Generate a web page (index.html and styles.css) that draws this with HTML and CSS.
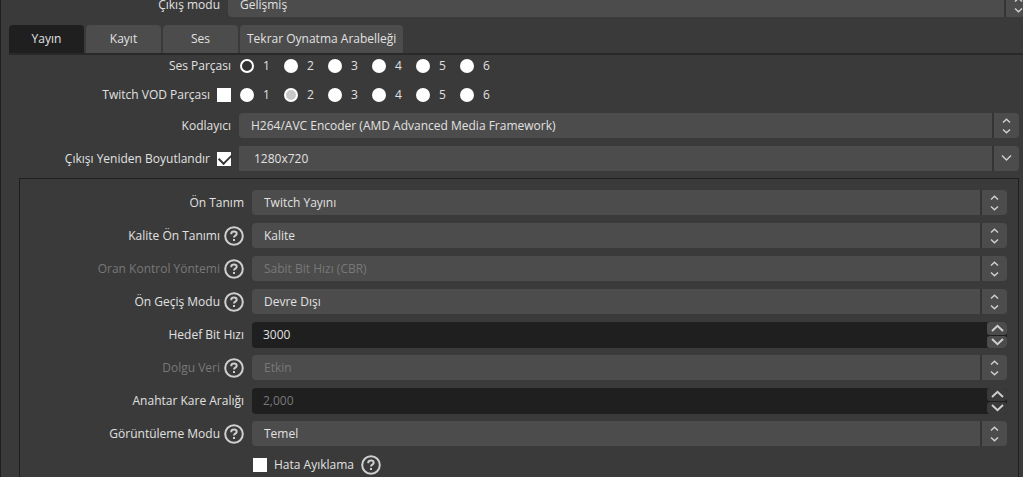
FILE: index.html
```html
<!DOCTYPE html>
<html lang="tr">
<head>
<meta charset="utf-8">
<title>Çıkış</title>
<link rel="stylesheet" href="styles.css">
</head>
<body>
<svg class="defs" aria-hidden="true">
  <symbol id="updown" viewBox="0 0 9 16"><path d="M1 4.5 4.5 1.2 8 4.5M1 11.5 4.5 14.8 8 11.5"/></symbol>
  <symbol id="down" viewBox="0 0 11 8"><path d="M1 1.5 5.500 6 10 1.500"/></symbol>
  <symbol id="up-big" viewBox="0 0 13 8"><path d="M1 7 6.500 1.800 12 7"/></symbol>
  <symbol id="down-big" viewBox="0 0 13 8"><path d="M1 1 6.500 6.200 12 1"/></symbol>
  <symbol id="help" viewBox="0 0 20 20"><circle cx="10" cy="10" r="8.800"/><path d="M7.300 8.300V7.500C7.300 6.200 8.500 5.500 10 5.500S12.700 6.300 12.700 7.700C12.700 9.600 10 9.600 10 11.400"/><path d="M10 13v2"/></symbol>
</svg>
<main class="page">
  <div class="mode-row">
    <label class="label" for="mode">Çıkış modu</label>
    <div class="combo"><select id="mode"><option>Gelişmiş</option></select><svg class="arrows"><use href="#updown"/></svg></div>
  </div>

  <nav class="tabs" role="tablist">
    <button class="tab active" role="tab" aria-selected="true">Yayın</button>
    <button class="tab" role="tab">Kayıt</button>
    <button class="tab" role="tab">Ses</button>
    <button class="tab wide" role="tab">Tekrar Oynatma Arabelleği</button>
  </nav>

  <form class="form">
    <div class="row">
      <span class="label" id="track-label">Ses Parçası</span>
      <div class="tracks" role="radiogroup" aria-labelledby="track-label">
        <label><input class="radio" type="radio" name="track" checked>1</label>
        <label><input class="radio" type="radio" name="track">2</label>
        <label><input class="radio" type="radio" name="track">3</label>
        <label><input class="radio" type="radio" name="track">4</label>
        <label><input class="radio" type="radio" name="track">5</label>
        <label><input class="radio" type="radio" name="track">6</label>
      </div>
    </div>
    <div class="row">
      <label class="label">Twitch VOD Parçası<input class="check" type="checkbox"></label>
      <div class="tracks muted" role="radiogroup" aria-label="Twitch VOD Parçası">
        <label><input class="radio" type="radio" name="vod">1</label>
        <label><input class="radio" type="radio" name="vod" checked>2</label>
        <label><input class="radio" type="radio" name="vod">3</label>
        <label><input class="radio" type="radio" name="vod">4</label>
        <label><input class="radio" type="radio" name="vod">5</label>
        <label><input class="radio" type="radio" name="vod">6</label>
      </div>
    </div>
    <div class="row">
      <label class="label" for="encoder">Kodlayıcı</label>
      <div class="combo"><select id="encoder"><option>H264/AVC Encoder (AMD Advanced Media Framework)</option></select><svg class="arrows"><use href="#updown"/></svg></div>
    </div>
    <div class="row">
      <label class="label">Çıkışı Yeniden Boyutlandır<input class="check" type="checkbox" checked></label>
      <div class="combo editable"><select aria-label="Çözünürlük"><option>1280x720</option></select><svg class="arrows single"><use href="#down"/></svg></div>
    </div>

    <section class="group">
      <div class="row">
        <label class="label" for="preset">Ön Tanım</label>
        <div class="combo"><select id="preset"><option>Twitch Yayını</option></select><svg class="arrows"><use href="#updown"/></svg></div>
      </div>
      <div class="row">
        <label class="label" for="quality">Kalite Ön Tanımı<svg class="help"><use href="#help"/></svg></label>
        <div class="combo"><select id="quality"><option>Kalite</option></select><svg class="arrows"><use href="#updown"/></svg></div>
      </div>
      <div class="row disabled">
        <label class="label" for="rate">Oran Kontrol Yöntemi<svg class="help"><use href="#help"/></svg></label>
        <div class="combo"><select id="rate" disabled><option>Sabit Bit Hızı (CBR)</option></select><svg class="arrows"><use href="#updown"/></svg></div>
      </div>
      <div class="row">
        <label class="label" for="prepass">Ön Geçiş Modu<svg class="help"><use href="#help"/></svg></label>
        <div class="combo"><select id="prepass"><option>Devre Dışı</option></select><svg class="arrows"><use href="#updown"/></svg></div>
      </div>
      <div class="row">
        <label class="label" for="bitrate">Hedef Bit Hızı</label>
        <div class="spin">
          <input id="bitrate" type="text" value="3000">
          <div class="steps"><button type="button" aria-label="Artır"><svg><use href="#up-big"/></svg></button><button type="button" aria-label="Azalt"><svg><use href="#down-big"/></svg></button></div>
        </div>
      </div>
      <div class="row disabled">
        <label class="label" for="filler">Dolgu Veri<svg class="help"><use href="#help"/></svg></label>
        <div class="combo"><select id="filler" disabled><option>Etkin</option></select><svg class="arrows"><use href="#updown"/></svg></div>
      </div>
      <div class="row">
        <label class="label" for="keyframe">Anahtar Kare Aralığı</label>
        <div class="spin">
          <input id="keyframe" type="text" value="2,000" disabled>
          <div class="steps"><button type="button" aria-label="Artır" disabled><svg><use href="#up-big"/></svg></button><button type="button" aria-label="Azalt" disabled><svg><use href="#down-big"/></svg></button></div>
        </div>
      </div>
      <div class="row">
        <label class="label" for="view">Görüntüleme Modu<svg class="help"><use href="#help"/></svg></label>
        <div class="combo"><select id="view"><option>Temel</option></select><svg class="arrows"><use href="#updown"/></svg></div>
      </div>
      <div class="row">
        <span></span>
        <label class="debug"><input class="check" type="checkbox">Hata Ayıklama<svg class="help"><use href="#help"/></svg></label>
      </div>
    </section>
  </form>
</main>
</body>
</html>
```
FILE: styles.css
```css
* { box-sizing: border-box; }

body {
  margin: 0;
  height: 100vh;
  overflow: hidden;
  background: #3a3a3a;
  color: #e1e1e1;
  font: 12px/16px "Open Sans", "Noto Sans", sans-serif;
}

select, input, button {
  margin: 0;
  font: inherit;
  color: inherit;
}

svg {
  fill: none;
  stroke: #cfcfcf;
  stroke-width: 1.5;
}

.defs {
  position: absolute;
  width: 0;
  height: 0;
}

.page {
  min-height: 100vh;
  padding-left: 8px;
  border-left: 1px solid #1f1f1f;
  overflow: hidden;
}

/* The first row is scrolled partly out of view. */
.mode-row {
  display: grid;
  grid-template-columns: 211px 1fr;
  gap: 8px;
  align-items: center;
  margin: -8px -8px 8px 0;
}

.label {
  display: flex;
  align-items: center;
  justify-content: flex-end;
  gap: 7px;
  white-space: nowrap;
}

.label:has(.help) { gap: 4px; }

.combo {
  position: relative;
  display: flex;
}

.combo select {
  appearance: none;
  flex: 1;
  min-width: 0;
  height: 25px;
  padding: 0 36px 0 12px;
  border: 0;
  border-radius: 4px;
  background: linear-gradient(#343434, #343434) right 25px top / 2px 100% no-repeat #4c4c4c;
  opacity: 1;
}

.combo.editable select { padding-left: 15px; border-radius: 0 4px 4px 0; }

.arrows {
  position: absolute;
  top: 5px;
  right: 8px;
  width: 9px;
  height: 16px;
  pointer-events: none;
}

.arrows.single {
  top: 8px;
  right: 7px;
  width: 11px;
  height: 8px;
}

.tabs {
  display: flex;
  gap: 2px;
  border-bottom: 2px solid #292929;
}

.tab {
  width: 75px;
  height: 28px;
  padding: 0;
  border: 0;
  border-radius: 4px 4px 0 0;
  background: #4c4c4c;
}

.tab.wide { width: auto; padding: 0 7px; }

.tab.active { background: #1f1f1f; }

.form {
  display: flex;
  flex-direction: column;
  gap: 8px;
  padding-right: 4px;
}

.row {
  display: grid;
  grid-template-columns: 222px 1fr;
  gap: 8px;
  align-items: center;
  min-height: 21px;
}

.tracks { display: flex; padding-left: 1px; }

.tracks label {
  display: flex;
  align-items: center;
  gap: 9px;
  width: 44px;
}

.radio, .check {
  appearance: none;
  flex: none;
  width: 14px;
  height: 14px;
  background: #fff;
}

.radio { border-radius: 50%; }

.radio:checked {
  border: 2px solid #fff;
  background: #333;
}

.muted .radio:checked { background: #c8c8c8; }

.check:checked::after {
  content: "";
  display: block;
  width: 10px;
  height: 6px;
  margin: 2px 0 0 2px;
  border: solid #333;
  border-width: 0 0 2px 2px;
  transform: rotate(-45deg);
}

.group {
  display: flex;
  flex-direction: column;
  gap: 8px;
  margin: -1px 0 0 10px;
  padding: 11px 11px 8px 0;
  border: 1px solid #1f1f1f;
}

.group .row { grid-template-columns: 224px 1fr; }

.help {
  width: 20px;
  height: 20px;
  stroke-width: 2;
}

.disabled, input:disabled { color: #787878; }

.spin {
  display: flex;
  height: 26px;
  border-radius: 4px;
  background: #1f1f1f;
  overflow: hidden;
}

.group .row:has(.spin) { height: 25px; }

.spin input {
  flex: 1;
  min-width: 0;
  padding: 0 11px;
  border: 0;
  background: transparent;
}

.steps {
  display: flex;
  flex-direction: column;
  gap: 1px;
  width: 20px;
}

.steps button {
  display: flex;
  flex: 1;
  align-items: center;
  justify-content: center;
  min-height: 0;
  padding: 0;
  border: 0;
  border-radius: 3px;
  background: #4c4c4c;
}

.steps button:disabled { background: #3a3a3a; }

.steps svg { width: 13px; height: 8px; stroke-width: 2; }

.debug {
  display: flex;
  align-items: center;
  gap: 7px;
  padding-left: 1px;
}
```
